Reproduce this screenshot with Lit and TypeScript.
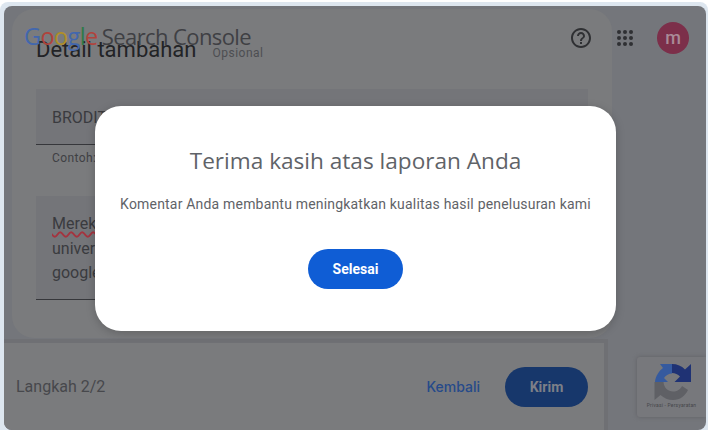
import { LitElement, html, css } from "lit";
import { customElement } from "lit/decorators.js";

@customElement("app-root")
export class AppRoot extends LitElement {
  static styles = css`
    :host {
      display: block;
      position: relative;
      width: 708px;
      height: 430px;
      overflow: hidden;
      background: #fff;
      font-family: Roboto, "Liberation Sans", sans-serif;
    }
    .page {
      height: 428px;
      margin-top: 2px;
      padding: 4px 2px 0 4px;
      box-sizing: border-box;
      background: #dde6ef;
      border-radius: 8px 8px 0 0;
    }
    .shell {
      position: relative;
      height: 424px;
      display: flex;
      flex-direction: column;
      background: #74767b;
      border-radius: 8px;
      overflow: hidden;
    }
    .card {
      width: 600px;
      height: 329px;
      margin: 3px 0 0 8px;
      padding: 28px 24px 0;
      box-sizing: border-box;
      background: #7a7b7d;
      border-radius: 22px;
      flex: none;
    }
    .card-head {
      display: flex;
      align-items: baseline;
      gap: 16px;
      height: 26px;
      color: #222326;
      font-size: 22px;
      line-height: 26px;
    }
    .card-head small {
      font-size: 12px;
      letter-spacing: 0.5px;
      color: #4d4e52;
    }
    .field {
      background: #747579;
      border-bottom: 1px solid #36373b;
      padding: 0 16px;
      color: #3a3b3f;
      font-size: 16px;
      box-sizing: border-box;
    }
    .field.one {
      margin-top: 26px;
      height: 56px;
      line-height: 57px;
    }
    .hint {
      height: 51px;
      padding: 6px 16px 0;
      box-sizing: border-box;
      font-size: 12px;
      line-height: 14px;
      letter-spacing: 0.4px;
      color: #3f4044;
    }
    .field.two {
      height: 104px;
      padding-top: 16px;
      line-height: 24.5px;
    }
    .field.two .typo {
      text-decoration: underline wavy #a3343f 1.5px;
      text-underline-offset: 2px;
    }
    .footer {
      width: 604px;
      flex: 1;
      margin-top: 1px;
      display: flex;
      align-items: center;
      justify-content: space-between;
      padding: 0 16px 0 12px;
      box-sizing: border-box;
      background: #7a7b7d;
      border-top: 4px solid #6f7074;
      border-right: 4px solid #6f7074;
    }
    .steps {
      font-size: 16px;
      color: #47484c;
    }
    .actions {
      display: flex;
      align-items: center;
      gap: 25px;
    }
    .back {
      font-family: Inter, Roboto, sans-serif;
      font-size: 14px;
      font-weight: 500;
      color: #264a8a;
    }
    .send {
      width: 83px;
      height: 40px;
      border-radius: 20px;
      background: #17376b;
      color: #7d8088;
      font-size: 14px;
      font-weight: 700;
      text-align: center;
      line-height: 40px;
    }
    .topbar {
      position: absolute;
      left: 20px;
      top: 16px;
      right: 17px;
      display: flex;
      align-items: center;
      height: 32px;
    }
    .logo {
      margin-bottom: 4px;
      font-family: "Open Sans", sans-serif;
      font-size: 22px;
      letter-spacing: -0.6px;
      color: #3f4044;
      white-space: nowrap;
    }
    .brand {
      font-size: 23.5px;
      margin-right: -1px;
    }
    .g { color: #4267ad; }
    .r { color: #b0433c; }
    .y { color: #b08f28; }
    .n { color: #2f7a48; }
    .tools {
      margin-left: auto;
      display: flex;
      align-items: center;
    }
    .tools svg { display: block; }
    .help { margin-right: 20px; }
    .apps { margin-right: 20px; }
    .avatar {
      width: 32px;
      height: 32px;
      border-radius: 50%;
      background: #7c2f4a;
      color: #a98a97;
      font-size: 18px;
      font-weight: 500;
      text-align: center;
      line-height: 31px;
    }
    .captcha {
      position: absolute;
      left: 633px;
      top: 351px;
      width: 69px;
      height: 60px;
      background: #77787c;
      border-radius: 3px 0 0 3px;
      box-shadow: 0 0 4px #606165;
      text-align: center;
    }
    .captcha svg {
      display: block;
      margin: 7px 0 0 17px;
    }
    .captcha span {
      display: block;
      margin-top: 1px;
      font-size: 5px;
      letter-spacing: 0.2px;
      color: #45464a;
      white-space: nowrap;
    }
    .dialog {
      position: absolute;
      left: 95px;
      top: 106px;
      width: 521px;
      height: 225px;
      padding-top: 40px;
      box-sizing: border-box;
      background: #fff;
      border-radius: 26px;
      box-shadow: 0 2px 10px rgba(0, 0, 0, 0.2);
      display: flex;
      flex-direction: column;
      align-items: center;
    }
    .dialog h2 {
      margin: 0;
      font-family: "Open Sans", sans-serif;
      font-size: 22.6px;
      line-height: 30px;
      font-weight: 400;
      color: #5f6368;
    }
    .dialog p {
      margin: 18px 0 0;
      font-size: 14px;
      line-height: 20px;
      letter-spacing: 0.19px;
      color: #5f6368;
    }
    .done {
      margin-top: 35px;
      width: 95px;
      height: 40px;
      border-radius: 20px;
      background: #0f5dd5;
      color: #fff;
      font-size: 14px;
      font-weight: 700;
      line-height: 40px;
      text-align: center;
    }
  `;

  render() {
    return html`
      <div class="page">
        <div class="shell">
          <div class="card">
            <div class="card-head">Detail tambahan <small>Opsional</small></div>
            <div class="field one">BRODIT</div>
            <div class="hint">Contoh:</div>
            <div class="field two">
              <span class="typo">Merek</span><br />univer<br />google
            </div>
          </div>
          <div class="footer">
            <span class="steps">Langkah 2/2</span>
            <div class="actions">
              <span class="back">Kembali</span>
              <span class="send">Kirim</span>
            </div>
          </div>
          <div class="topbar">
            <span class="logo"
              ><span class="brand"
                ><span class="g">G</span><span class="r">o</span><span class="y">o</span><span class="g">g</span><span
                  class="n"
                  >l</span
                ><span class="r">e</span></span
              >
              Search Console</span
            >
            <div class="tools">
              <svg class="help" width="24" height="24" viewBox="0 0 24 24" fill="#2f3033">
                <path
                  d="M11 18h2v-2h-2v2zm1-16C6.48 2 2 6.48 2 12s4.48 10 10 10 10-4.48 10-10S17.52 2 12 2zm0 18c-4.41 0-8-3.59-8-8s3.59-8 8-8 8 3.59 8 8-3.59 8-8 8zm0-14c-2.21 0-4 1.79-4 4h2c0-1.1.9-2 2-2s2 .9 2 2c0 2-3 1.75-3 5h2c0-2.25 3-2.5 3-5 0-2.21-1.79-4-4-4z"
                />
              </svg>
              <svg class="apps" width="24" height="24" viewBox="0 0 24 24" fill="#2f3033">
                <circle cx="6" cy="6" r="2" /><circle cx="12" cy="6" r="2" /><circle cx="18" cy="6" r="2" />
                <circle cx="6" cy="12" r="2" /><circle cx="12" cy="12" r="2" /><circle cx="18" cy="12" r="2" />
                <circle cx="6" cy="18" r="2" /><circle cx="12" cy="18" r="2" /><circle cx="18" cy="18" r="2" />
              </svg>
              <div class="avatar">m</div>
            </div>
          </div>
          <div class="captcha">
            <svg width="38" height="37" viewBox="0 0 38 37">
              <path fill="#1f3274" d="M18 0A18 18 0 0 1 31 5.500L37 0V18H20.500L26 12.500A11 11 0 0 0 18 9Z" />
              <path fill="#355a9f" d="M18 0H6L9 4C5 7 1.500 12 1 18H14L10 14C12 11 15 9.500 18 9.500Z" />
              <path
                fill="#5f6065"
                d="M0.500 18H9.500C10 24 14 27.500 19 27.500C23 27.500 26.500 25.500 28 22L34 26C31 32 26 36 19 36C14 36 10 34 6.500 31L0.500 36Z"
              />
            </svg>
            <span>Privasi - Persyaratan</span>
          </div>
        </div>
      </div>
      <div class="dialog">
        <h2>Terima kasih atas laporan Anda</h2>
        <p>Komentar Anda membantu meningkatkan kualitas hasil penelusuran kami</p>
        <div class="done">Selesai</div>
      </div>
    `;
  }
}
